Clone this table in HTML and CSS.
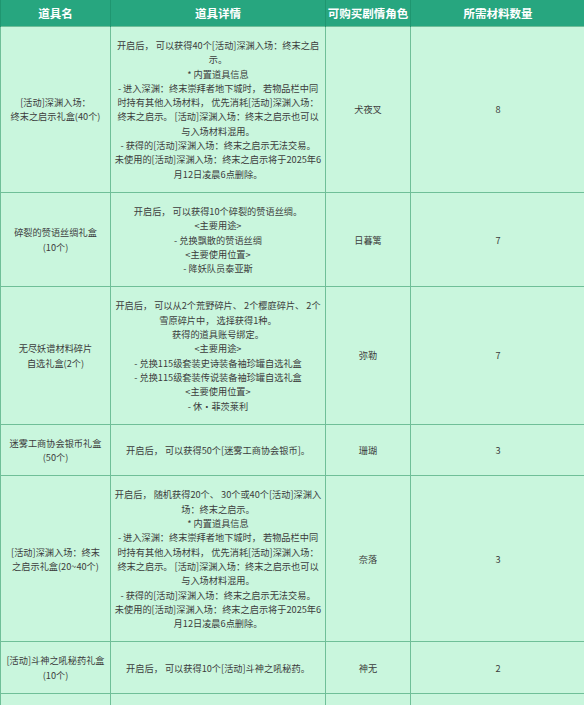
FILE: index.html
```html
<!DOCTYPE html>
<html lang="zh-CN">
<head>
<meta charset="utf-8">
<title>道具列表</title>
<link rel="stylesheet" href="styles.css">
</head>
<body>
<table class="items">
  <colgroup>
    <col class="c-name">
    <col class="c-detail">
    <col class="c-role">
    <col class="c-count">
  </colgroup>
  <thead>
    <tr><th>道具名</th><th>道具详情</th><th>可购买剧情角色</th><th>所需材料数量</th></tr>
  </thead>
  <tbody>
    <tr>
      <td>[活动]深渊入场：<br>终末之启示礼盒(40个)</td>
      <td>开启后， 可以获得40个[活动]深渊入场：终末之启<br>示。<br>* 内置道具信息<br>- 进入深渊：终末崇拜者地下城时， 若物品栏中同<br>时持有其他入场材料， 优先消耗[活动]深渊入场：<br>终末之启示。 [活动]深渊入场：终末之启示也可以<br>与入场材料混用。<br>- 获得的[活动]深渊入场：终末之启示无法交易。<br>未使用的[活动]深渊入场：终末之启示将于2025年6<br>月12日凌晨6点删除。</td>
      <td>犬夜叉</td>
      <td>8</td>
    </tr>
    <tr>
      <td>碎裂的赞语丝绸礼盒<br>(10个)</td>
      <td>开启后， 可以获得10个碎裂的赞语丝绸。<br>&lt;主要用途&gt;<br>- 兑换飘散的赞语丝绸<br>&lt;主要使用位置&gt;<br>- 降妖队员泰亚斯</td>
      <td>日暮篱</td>
      <td>7</td>
    </tr>
    <tr>
      <td>无尽妖谱材料碎片<br>自选礼盒(2个)</td>
      <td>开启后， 可以从2个荒野碎片、 2个樱庭碎片、 2个<br>雪原碎片中， 选择获得1种。<br>获得的道具账号绑定。<br>&lt;主要用途&gt;<br>- 兑换115级套装史诗装备袖珍罐自选礼盒<br>- 兑换115级套装传说装备袖珍罐自选礼盒<br>&lt;主要使用位置&gt;<br>- 休·菲茨莱利</td>
      <td>弥勒</td>
      <td>7</td>
    </tr>
    <tr>
      <td>迷雾工商协会银币礼盒<br>(50个)</td>
      <td>开启后， 可以获得50个[迷雾工商协会银币]。</td>
      <td>珊瑚</td>
      <td>3</td>
    </tr>
    <tr>
      <td>[活动]深渊入场：终末<br>之启示礼盒(20~40个)</td>
      <td>开启后， 随机获得20个、 30个或40个[活动]深渊入<br>场：终末之启示。<br>* 内置道具信息<br>- 进入深渊：终末崇拜者地下城时， 若物品栏中同<br>时持有其他入场材料， 优先消耗[活动]深渊入场：<br>终末之启示。 [活动]深渊入场：终末之启示也可以<br>与入场材料混用。<br>- 获得的[活动]深渊入场：终末之启示无法交易。<br>未使用的[活动]深渊入场：终末之启示将于2025年6<br>月12日凌晨6点删除。</td>
      <td>奈落</td>
      <td>3</td>
    </tr>
    <tr>
      <td>[活动]斗神之吼秘药礼盒<br>(10个)</td>
      <td>开启后， 可以获得10个[活动]斗神之吼秘药。</td>
      <td>神无</td>
      <td>2</td>
    </tr>
    <tr class="next-row">
      <td></td>
      <td></td>
      <td></td>
      <td></td>
    </tr>
  </tbody>
</table>
</body>
</html>
```
FILE: styles.css
```css
html, body {
  margin: 0;
  padding: 0;
  background: #c9f6dd;
}

.items {
  width: 585px;
  border-collapse: collapse;
  table-layout: fixed;
  font-family: "Noto Sans CJK SC", "Noto Sans", sans-serif;
  color: #3c3c3c;
  background: #c9f6dd;
}

.c-name { width: 110px; }
.c-detail { width: 215px; }
.c-role { width: 85px; }
.c-count { width: 175px; }

.items th {
  height: 26px;
  padding: 0;
  background: #27a67f;
  color: #ffffff;
  font-size: 11.5px;
  font-weight: 700;
  text-align: center;
  vertical-align: middle;
  border-left: 1px solid #1f9670;
  border-right: 1px solid #1f9670;
}

.items td {
  padding: 11px 2px;
  font-size: 9.2px;
  line-height: 14.3px;
  text-align: center;
  vertical-align: middle;
  border: 1px solid #6fbf98;
  white-space: nowrap;
}

.items .next-row td {
  height: 40px;
}
```
